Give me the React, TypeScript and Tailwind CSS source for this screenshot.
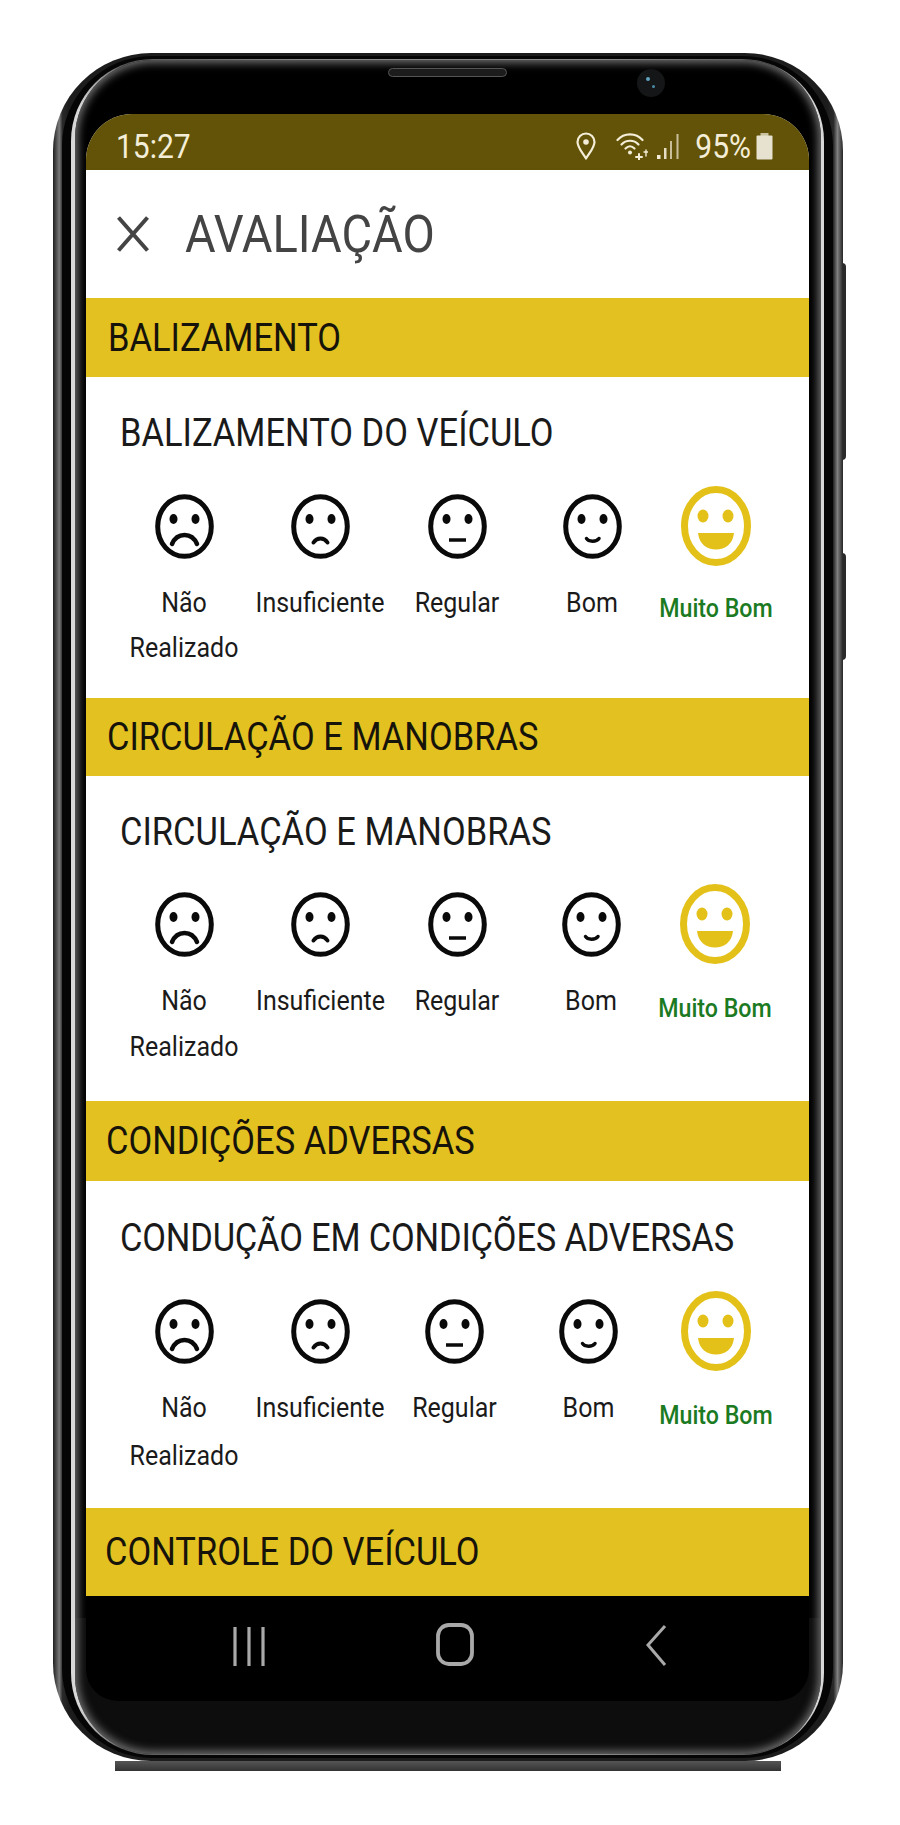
const roboto = "font-['Roboto',sans-serif]";
const tall = 'inline-block scale-y-[1.12]';

type Mood = 'none' | 'bad' | 'ok' | 'good';

/* Outline face. Slightly tall because the screenshot itself is stretched. */
function Face({ mood }: { mood: Mood }) {
  return (
    <svg width="59" height="65" viewBox="0 0 59 65" fill="none" stroke="#0a0a0a">
      <ellipse cx="29.5" cy="32.5" rx="26.8" ry="29.8" strokeWidth="5" />
      <ellipse cx="18.5" cy="25" rx="4" ry="5" fill="#0a0a0a" stroke="none" />
      <ellipse cx="40.5" cy="25" rx="4" ry="5" fill="#0a0a0a" stroke="none" />
      {mood === 'none' && <path d="M17 50C20 43 25 41 29.500 41C34 41 39 43 42 50" strokeWidth="4.500" strokeLinecap="round" />}
      {mood === 'bad' && <path d="M22.500 48.500C24.500 45.500 27.500 44.500 29.500 44.500C31.500 44.500 34.500 45.500 36.500 48.500" strokeWidth="4" strokeLinecap="round" />}
      {mood === 'ok' && <path d="M21 46H38" strokeWidth="3.500" />}
      {mood === 'good' && <path d="M23.500 44.500C25.500 48 33.500 48 36 44.500" strokeWidth="3.500" strokeLinecap="round" />}
    </svg>
  );
}

function HappyFace() {
  return (
    <svg width="70" height="80" viewBox="0 0 70 80" fill="none">
      <ellipse cx="35" cy="40" rx="31.500" ry="36.500" stroke="#e3c118" strokeWidth="7" />
      <ellipse cx="22" cy="30" rx="5.500" ry="6.500" fill="#e3c118" />
      <ellipse cx="47" cy="30" rx="5.500" ry="6.500" fill="#e3c118" />
      <path d="M17 47H53C52 58 44 63.500 35 63.500C26 63.500 18 58 17 47Z" fill="#e3c118" />
    </svg>
  );
}

type SectionProps = {
  bar: string;
  title: string;
  barHeight: string;
  barPad: string;
  titleBox: string;
  lineBox: string;
  bestBox: string;
  bottom: string;
  widths: string[];
};

function Section({ bar, title, barHeight, barPad, titleBox, lineBox, bestBox, bottom, widths }: SectionProps) {
  const columns: { lines: string[]; mood: Mood; width: string }[] = [
    { lines: ['Não', 'Realizado'], mood: 'none', width: widths[0] },
    { lines: ['Insuficiente'], mood: 'bad', width: widths[1] },
    { lines: ['Regular'], mood: 'ok', width: widths[2] },
    { lines: ['Bom'], mood: 'good', width: widths[3] },
  ];
  return (
    <section>
      <div className={`flex items-center bg-[#e3c121] pt-[2px] text-[34.5px] text-[#16130a] ${barHeight} ${barPad}`}>
        <span className={tall}>{bar}</span>
      </div>
      <div className={`pl-[34px] text-[34.5px] leading-[40px] text-[#1a1a1a] ${titleBox}`}>
        <span className={tall}>{title}</span>
      </div>
      <div className={`flex pl-[30px] ${bottom}`}>
        {columns.map((c) => (
          <div key={c.mood} className={`shrink-0 text-center ${c.width}`}>
            <div className="flex h-[80px] items-center justify-center">
              <Face mood={c.mood} />
            </div>
            <div className={`whitespace-nowrap text-[25px] text-[#1a1a1a] ${lineBox}`}>
              {c.lines.map((line) => (
                <div key={line} className="scale-y-[1.12]">{line}</div>
              ))}
            </div>
          </div>
        ))}
        <div className={`shrink-0 text-center ${widths[4]}`}>
          <div className="flex h-[80px] items-center justify-center">
            <HappyFace />
          </div>
          <div className={`whitespace-nowrap text-[23.200px] font-medium leading-[45px] text-[#1b7a22] ${bestBox}`}>
            <span className={tall}>Muito Bom</span>
          </div>
        </div>
      </div>
    </section>
  );
}

function StatusBar() {
  return (
    <div className="flex h-[56px] items-center bg-[#635308] pl-[30px] pr-[36px] pt-[8px] text-[30px] text-[#f4eed8]">
      <span className={tall}>15:27</span>
      <div className="flex-1" />
      <svg width="20" height="28" viewBox="0 0 20 28" fill="none" stroke="#f4eed8" strokeWidth="2.200">
        <path d="M10 26.500C7 21.500 1.500 15.500 1.500 10A8.500 8.500 0 0 1 18.500 10C18.500 15.500 13 21.500 10 26.500Z" strokeLinejoin="round" />
        <circle cx="10" cy="10" r="2.800" fill="#f4eed8" stroke="none" />
      </svg>
      {/* wifi with the little up/down plus marks */}
      <svg className="ml-[20px]" width="32" height="28" viewBox="0 0 32 28" fill="none" stroke="#f4eed8" strokeWidth="2.200" strokeLinecap="round">
        <path d="M1.500 8C8 .500 20 .500 26.500 8" />
        <path d="M5.500 12.500C10 7.500 18 7.500 22.500 12.500" />
        <path d="M9.500 16.500C12.500 13.500 15.500 13.500 18.500 16.500" />
        <circle cx="14" cy="20.500" r="2" fill="#f4eed8" stroke="none" />
        <path d="M20 25H26M23 22V27.500" strokeWidth="2" />
        <path d="M30 18V24M28 20H32" strokeWidth="1.400" />
      </svg>
      <svg className="ml-[9px]" width="23" height="27" viewBox="0 0 23 27" fill="#f4eed8">
        <rect x="0" y="22" width="3.500" height="4" />
        <rect x="7" y="15" width="2.500" height="11" opacity="0.9" />
        <rect x="13" y="8" width="2" height="18" opacity="0.7" />
        <rect x="19.500" y="1" width="2" height="25" opacity="0.7" />
      </svg>
      <span className={`ml-[15px] ${tall}`}>95%</span>
      <svg className="ml-[5px]" width="17" height="27" viewBox="0 0 17 27">
        <rect x="4.500" y="0" width="8" height="3" fill="#c9c2a0" />
        <rect x="0.500" y="2.500" width="16" height="24" rx="1" fill="#e6e2cf" />
      </svg>
    </div>
  );
}

function AppHeader() {
  return (
    <header className="flex h-[128px] items-center pl-[31px] text-[#444]">
      <svg width="32" height="36" viewBox="0 0 32 36" stroke="#444" strokeWidth="4">
        <path d="M1.500 1.500L30.500 34.500M30.500 1.500L1.500 34.500" />
      </svg>
      <h1 className={`ml-[36px] text-[47px] font-normal ${tall}`}>AVALIAÇÃO</h1>
    </header>
  );
}

function NavBar() {
  return (
    <nav className="relative h-[105px] rounded-b-[32px] bg-black">
      <div className="flex h-[70px] items-end pl-[147px]">
        <svg width="32" height="39" viewBox="0 0 32 39" stroke="#a9a9a9" strokeWidth="3.200">
          <path d="M2 0V39M16 0V39M30 0V39" />
        </svg>
        <svg className="ml-[171px]" width="38" height="43" viewBox="0 0 38 43" fill="none" stroke="#a9a9a9" strokeWidth="3.800">
          <rect x="2" y="2" width="34" height="39" rx="11" />
        </svg>
        <svg className="ml-[171px]" width="22" height="41" viewBox="0 0 22 41" fill="none" stroke="#a9a9a9" strokeWidth="3">
          <path d="M20 1L3 20L20 40" />
        </svg>
      </div>
    </nav>
  );
}

export default function App() {
  return (
    <div className={`min-h-[1825px] bg-white pl-[53px] pt-[53px] ${roboto}`}>
      <div className="relative w-[790px]">
        {/* side keys */}
        <div className="absolute -right-[3px] top-[210px] h-[197px] w-[4px] rounded-r-sm bg-[#2a2a2a]" />
        <div className="absolute -right-[3px] top-[500px] h-[107px] w-[4px] rounded-r-sm bg-[#2a2a2a]" />

        {/* body rings, outermost first */}
        <div className="relative rounded-[98px] bg-[linear-gradient(90deg,#1e1e1e,#7a7a7a_0.800%,#2a2a2a_1.200%,#1c1c1c_2%,#1c1c1c_98%,#2a2a2a_98.800%,#808080_99.300%,#252525)] pb-[3px] pl-[9px] pr-[10px] pt-[3px]">
          <div className="rounded-[90px] bg-[#050505] pb-[3px] pl-[9px] pr-[9px] pt-[3px]">
            <div className="rounded-[82px] bg-[linear-gradient(90deg,#d8d8d8,#d8d8d8_1%,#555_7%,#8a8a8a_30%,#8a8a8a_70%,#555_93%,#d8d8d8_99%,#d8d8d8)] pb-[1px] pl-[4px] pr-[3px] pt-[1px]">
              <div className="rounded-[78px] bg-[linear-gradient(to_bottom,#000_92%,#0d0d0d_92%)] pb-[53px] pl-[11px] pr-[12px] shadow-[inset_0_0_9px_3px_#6e6e6e]">
                {/* top bezel */}
                <div className="flex h-[54px] items-start pl-[302px] pt-[8px]">
                  <div className="h-[9px] w-[119px] rounded-full border border-[#555] bg-[#1c1c1c]" />
                  <div className="relative ml-[130px] mt-[1px] h-[28px] w-[28px] rounded-full bg-[#141618]">
                    <div className="absolute left-[9px] top-[8px] h-[4px] w-[4px] rounded-full bg-[#5fa3bd]" />
                    <div className="absolute left-[15px] top-[16px] h-[3px] w-[3px] rounded-full bg-[#4a8aa5]" />
                  </div>
                </div>

                <div className="overflow-hidden rounded-t-[46px] bg-white">
                  <StatusBar />
                  <AppHeader />
                  <Section
                    bar="BALIZAMENTO"
                    title="BALIZAMENTO DO VEÍCULO"
                    barHeight="h-[79px]"
                    barPad="pl-[22px]"
                    titleBox="pt-[36px] pb-[33px]"
                    lineBox="pt-[14px] leading-[45px]"
                    bestBox="pt-[20px]"
                    bottom="pb-[28px]"
                    widths={['w-[136px]', 'w-[136px]', 'w-[138px]', 'w-[132px]', 'w-[116px]']}
                  />
                  <Section
                    bar="CIRCULAÇÃO E MANOBRAS"
                    title="CIRCULAÇÃO E MANOBRAS"
                    barHeight="h-[78px]"
                    barPad="pl-[21px]"
                    titleBox="pt-[36px] pb-[32px]"
                    lineBox="pt-[14px] leading-[46px]"
                    bestBox="pt-[22px]"
                    bottom="pb-[31px]"
                    widths={['w-[136px]', 'w-[137px]', 'w-[136px]', 'w-[132px]', 'w-[116px]']}
                  />
                  <Section
                    bar="CONDIÇÕES ADVERSAS"
                    title="CONDUÇÃO EM CONDIÇÕES ADVERSAS"
                    barHeight="h-[80px]"
                    barPad="pl-[20px]"
                    titleBox="pt-[37px] pb-[33px] tracking-[-0.2px]"
                    lineBox="pt-[13px] leading-[48px]"
                    bestBox="pt-[22px]"
                    bottom="pb-[28px]"
                    widths={['w-[136px]', 'w-[136px]', 'w-[133px]', 'w-[135px]', 'w-[120px]']}
                  />
                  <div className="flex h-[88px] items-center bg-[#e3c121] pl-[19px] pt-[2px] text-[34.5px] text-[#16130a]">
                    <span className={tall}>CONTROLE DO VEÍCULO</span>
                  </div>
                </div>
                <NavBar />
              </div>
            </div>
          </div>
        </div>
        {/* flat lower edge of the body */}
        <div className="mx-[62px] h-[10px] bg-[linear-gradient(to_bottom,#555,#333)]" />
      </div>
    </div>
  );
}
